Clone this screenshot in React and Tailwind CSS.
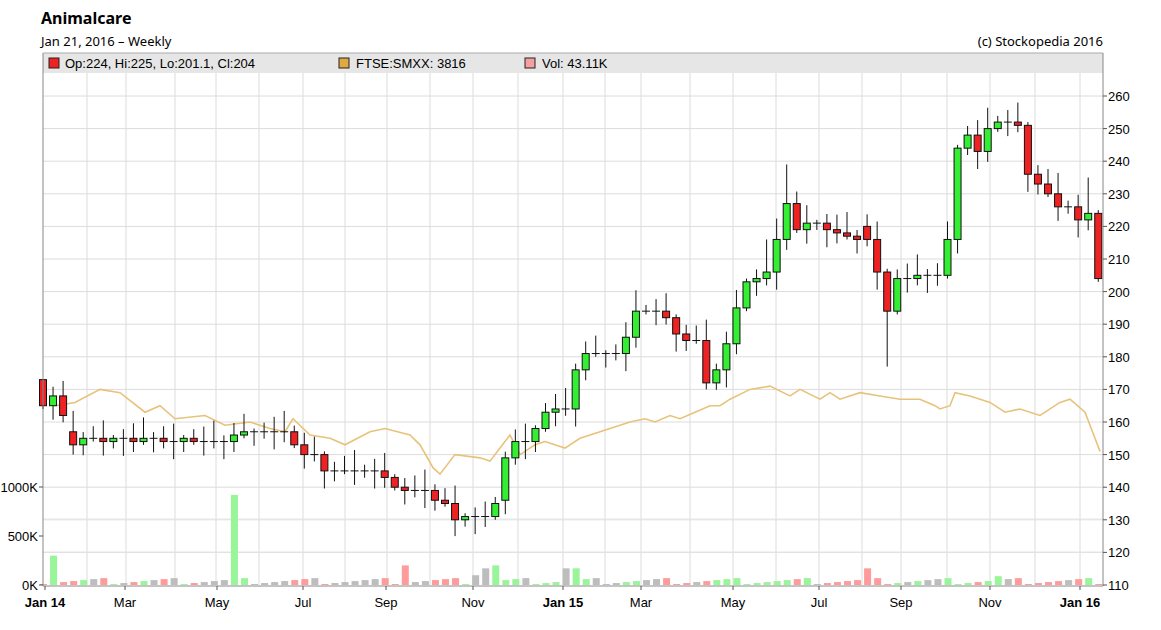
import React from "react";

const closes = [165,168,162,153,155,155,154,155,155,154,155,155,154,154,155,154,154,154,154,156,157,157,157,157,157,153,150,150,145,145,145,145,145,145,143,140,139,139,139,136,135,130,131,131,131,135,149,154,154,158,163,164,164,176,181,181,181,181,186,194,194,194,192,187,185,185,172,176,184,195,203,204,206,216,227,219,221,221,219,218,217,216,216,206,194,204,204,205,205,205,216,244,248,243,250,252,252,251,236,233,230,226,226,222,224,204];
const openOverride = { 0: 173, 3: 157, 46: 136, 82: 220, 105: 224, 91: 216 };
const hiOverride = { 0: 173, 74: 239, 97: 258, 104: 235, 72: 216, 45: 137 };
const loOverride = { 84: 177, 41: 125, 66: 170, 3: 150 };
const volOverride = { 1: 300, 19: 920, 36: 200, 43: 100, 44: 170, 45: 200, 52: 170, 53: 170, 82: 170, 95: 90 };

const ftse = [[55,165],[75,166],[100,170],[120,169],[145,163],[160,165],[175,161],[205,162],[225,159],[250,160],[270,158],[285,157],[293,161],[310,156],[330,155],[345,153],[370,157],[385,158],[410,156],[420,153],[433,146],[440,144],[455,150],[480,149],[490,148],[500,152],[510,156],[520,150],[535,153],[545,154],[565,152],[580,155],[600,157],[630,160],[645,161],[655,160],[670,162],[680,161],[695,163],[710,165],[720,165],[730,167],[750,170],[770,171],[790,168],[800,170],[820,167],[830,169],[840,167],[860,169],[880,168],[900,167],[920,167],[935,165],[940,164],[950,165],[955,169],[970,168],[990,166],[1005,163],[1020,164],[1040,162],[1060,166],[1070,167],[1085,163],[1095,155],[1100,151]];

const py = (p) => 585 - (p - 110) * 3.26;
const vy = (v) => 585 - v * 0.098;
const L = 43, R = 1103, T = 53, B = 585;
const vgrid = [87, 126, 175, 216, 259, 303, 345, 387, 430, 473, 518, 563, 605, 641, 690, 733, 776, 819, 862, 901, 947, 990, 1035, 1080];
const months = [["Jan 14",45,1],["Mar",125],["May",217],["Jul",303],["Sep",386],["Nov",473],["Jan 15",563,1],["Mar",641],["May",733],["Jul",819],["Sep",901],["Nov",990],["Jan 16",1080,1]];

export default function App() {
  const candles = closes.map((c, i) => {
    const o = openOverride[i] ?? (i === 0 ? c : closes[i - 1]);
    const hi = hiOverride[i] ?? Math.max(o, c) + 1 + ((i * 37) % 7) * 0.9;
    const lo = loOverride[i] ?? Math.min(o, c) - 1 - ((i * 53) % 5) * 1.1;
    const vol = volOverride[i] ?? 10 + ((i * 29) % 7) * 10;
    return { x: 43 + i * 10.05, o, c, hi, lo, vol };
  });
  return (
    <div className="w-[1161px] h-[630px] overflow-hidden bg-white font-['Liberation_Sans',Arial,sans-serif] text-black">
      <div className="px-[41px] pt-[8px] h-[52px]">
        <div className="text-[16px] font-bold leading-5">Animalcare</div>
        <div className="flex justify-between text-[13px] leading-4 mt-[5px] pr-[17px]">
          <span>Jan 21, 2016 – Weekly</span>
          <span>(c) Stockopedia 2016</span>
        </div>
      </div>
      <svg width="1161" height="578" viewBox="0 52 1161 578" className="block" fontFamily="'Liberation Sans', Arial, sans-serif">
        <rect x={L} y={T} width={R - L} height={20} fill="#e6e6e6" />
        {vgrid.map((x) => (
          <line key={x} x1={x} x2={x} y1={T + 20} y2={B} stroke="#dcdcdc" />
        ))}
        {Array.from({ length: 15 }, (_, k) => py(120 + k * 10)).map((y) => (
          <line key={y} x1={L} x2={R} y1={y} y2={y} stroke="#dcdcdc" />
        ))}
        {[519, 552].map((y) => (
          <line key={y} x1={L} x2={R} y1={y} y2={y} stroke="#e6e6e6" />
        ))}
        {candles.map((d, i) => (
          <rect key={"v" + i} x={d.x - 3} y={vy(d.vol)} width="7" height={585 - vy(d.vol)}
            fill={d.c > d.o ? "#99f599" : d.c < d.o ? "#ff9b9b" : "#bdbdbd"} />
        ))}
        <polyline points={ftse.map(([x, p]) => `${x},${py(p)}`).join(" ")} fill="none" stroke="#e8c27a" strokeWidth="1.6" />
        {candles.map((d, i) => {
          const top = py(Math.max(d.o, d.c));
          const h = Math.abs(py(d.o) - py(d.c));
          return (
            <g key={i}>
              <line x1={d.x} x2={d.x} y1={py(d.hi)} y2={py(d.lo)} stroke="#111" />
              {h < 1.5 ? (
                <line x1={d.x - 4} x2={d.x + 4} y1={top} y2={top} stroke="#111" />
              ) : (
                <rect x={d.x - 3.5} y={top} width="7" height={h} fill={d.c > d.o ? "#33ee33" : "#ee2222"} stroke="#111" />
              )}
            </g>
          );
        })}
        <line x1={L} x2={L} y1={T} y2={B + 1} stroke="#888" />
        <line x1={R} x2={R} y1={T} y2={B + 1} stroke="#888" />
        <line x1={L} x2={R} y1={T} y2={T} stroke="#aaa" />
        <line x1={L} x2={R} y1={B + 1} y2={B + 1} stroke="#888" />
        <rect x="49" y="58" width="10" height="10" fill="#ee2222" stroke="#222" />
        <text x="65" y="68" fontSize="13">Op:224, Hi:225, Lo:201.1, Cl:204</text>
        <rect x="339" y="58" width="10" height="10" fill="#e0aa40" stroke="#222" />
        <text x="356" y="68" fontSize="13">FTSE:SMXX: 3816</text>
        <rect x="525" y="58" width="10" height="10" fill="#f4a0a0" stroke="#222" />
        <text x="542" y="68" fontSize="13">Vol: 43.11K</text>
        {Array.from({ length: 16 }, (_, k) => 110 + k * 10).map((p) => (
          <g key={p}>
            <line x1={R} x2={R + 4} y1={py(p)} y2={py(p)} stroke="#555" />
            <text x="1108" y={py(p) + 5} fontSize="13">{p}</text>
          </g>
        ))}
        {[["0K", 585], ["500K", 536], ["1000K", 487]].map(([t, y]) => (
          <g key={t}>
            <line x1={L - 4} x2={L} y1={y} y2={y} stroke="#555" />
            <text x="38" y={y + 5} fontSize="13" textAnchor="end">{t}</text>
          </g>
        ))}
        {months.map(([t, x, b]) => (
          <g key={t + x}>
            <line x1={x} x2={x} y1={B + 1} y2={B + 5} stroke="#555" />
            <text x={x} y="607" fontSize="13" textAnchor="middle" fontWeight={b ? "bold" : "normal"}>{t}</text>
          </g>
        ))}
      </svg>
    </div>
  );
}
